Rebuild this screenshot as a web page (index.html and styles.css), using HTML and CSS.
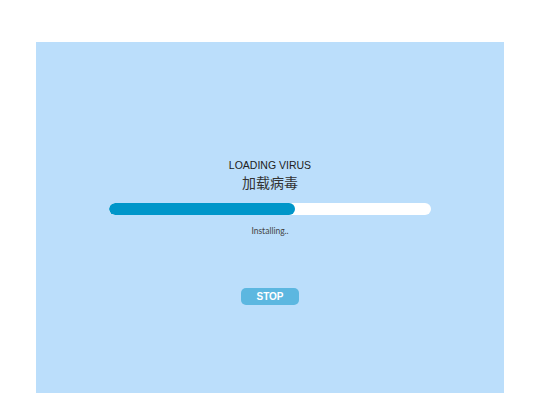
FILE: index.html
```html
<!DOCTYPE html>
<html lang="zh">
<head>
    <meta charset="UTF-8">
    <meta name="viewport" content="width=device-width, initial-scale=1.0">
    <title>Loading Virus</title>
    <link rel="stylesheet" href="styles.css">
</head>
<body>
    <div class="screen">
        <div class="loader">
            <p class="title">LOADING VIRUS</p>
            <p class="subtitle">加载病毒</p>
            <div class="bar">
                <div class="fill" style="width: 57.8%"></div>
            </div>
            <p class="status">Installing..</p>
            <button class="button">STOP</button>
        </div>
    </div>
</body>
</html>
```

FILE: styles.css
```css
body {
    margin: 0;
    background-color: #fff;
    font-family: 'Liberation Sans', Arial, sans-serif;
}
.screen {
    margin: 42px 36px 0;
    height: 351px;
    background-color: #bbdefb;
}
.loader {
    display: flex;
    flex-direction: column;
    align-items: center;
    padding-top: 117px;
}
.title {
    margin: 0;
    font-size: 10.5px;
    line-height: 13px;
    color: #222;
}
.subtitle {
    margin: 1px 0 0;
    font-family: 'Noto Sans CJK SC', sans-serif;
    font-size: 14px;
    line-height: 18px;
    color: #333;
}
.bar {
    margin-top: 12px;
    width: 322px;
    height: 12px;
    border-radius: 6px;
    background-color: #fff;
    overflow: hidden;
}
.fill {
    height: 100%;
    border-radius: 6px;
    background-color: #0096c9;
}
.status {
    margin: 11px 0 0;
    font-family: 'Lato', sans-serif;
    font-size: 8.5px;
    color: #444;
}
.button {
    margin-top: 52px;
    width: 58px;
    height: 17px;
    padding: 0;
    border: none;
    border-radius: 5px;
    background-color: #5cb7e0;
    color: #fff;
    font-family: 'Liberation Sans', Arial, sans-serif;
    font-weight: bold;
    font-size: 10px;
}
```
